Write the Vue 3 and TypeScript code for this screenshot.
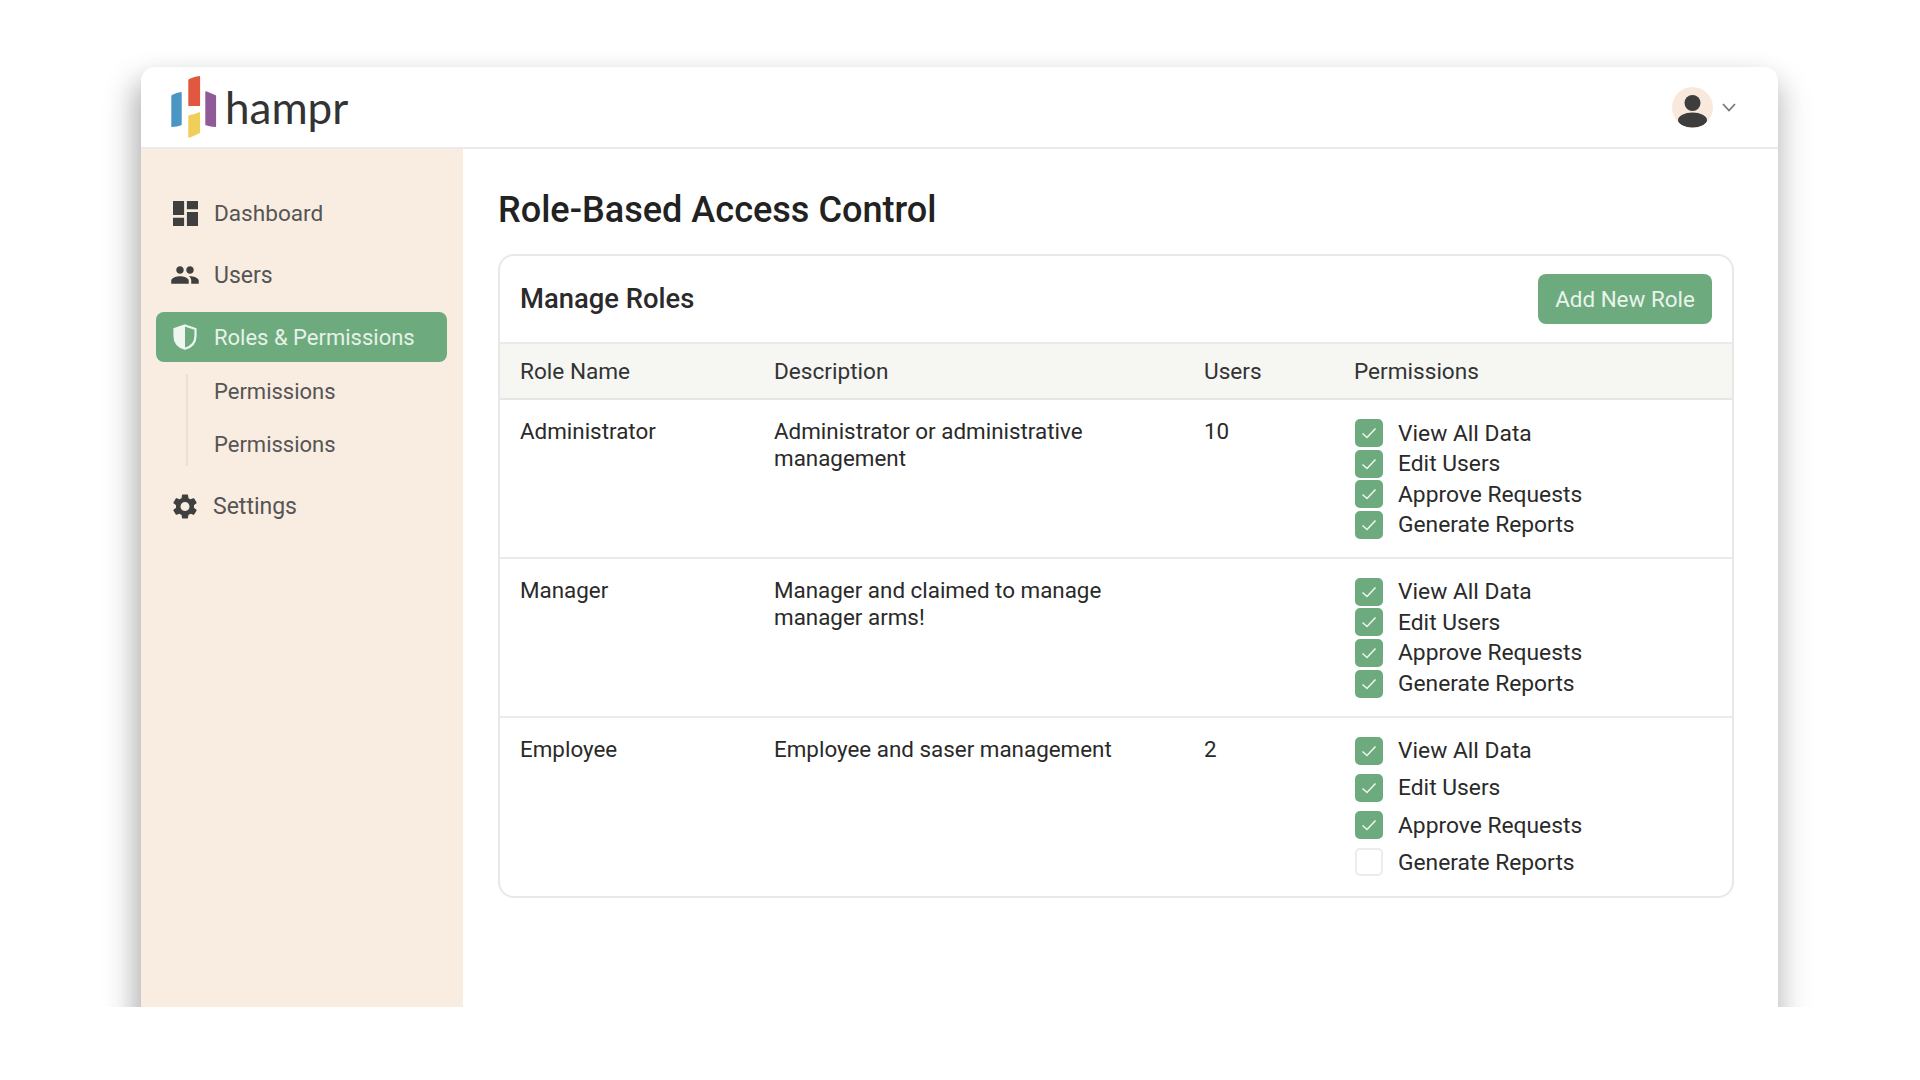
<script setup lang="ts">
interface Perm { label: string; on: boolean }
interface Role { name: string; desc: string[]; users: string; wide?: boolean; perms: Perm[] }
const labels = ['View All Data', 'Edit Users', 'Approve Requests', 'Generate Reports']
const mk = (off: string[] = []): Perm[] => labels.map((label) => ({ label, on: !off.includes(label) }))
const roles: Role[] = [
  { name: 'Administrator', desc: ['Administrator or administrative', 'management'], users: '10', perms: mk() },
  { name: 'Manager', desc: ['Manager and claimed to manage', 'manager arms!'], users: '', perms: mk() },
  { name: 'Employee', desc: ['Employee and saser management'], users: '2', wide: true, perms: mk(['Generate Reports']) },
]
</script>

<template>
  <div class="stage">
    <div class="window">
      <header class="topbar">
        <div class="brand">
          <svg class="logo" viewBox="0 0 46 62" width="46" height="62">
            <path d="M1 20 Q1 19 10 16.8 V48.5 Q6 50 1 50.2Z" fill="#4a97c4" stroke="#4a97c4" stroke-width="1.4" stroke-linejoin="round" />
            <path d="M18 4 Q18 3 28.4 0.8 V29.4 H18Z" fill="#e2573f" stroke="#e2573f" stroke-width="1.4" stroke-linejoin="round" />
            <path d="M18 40 Q24 39 28.4 36.8 V56.5 Q24 59 18 61.2Z" fill="#f0ce5a" stroke="#f0ce5a" stroke-width="1.4" stroke-linejoin="round" />
            <path d="M35 16 L44.4 20 V50.2 Q40 50 35 48.5Z" fill="#8f5a97" stroke="#8f5a97" stroke-width="1.4" stroke-linejoin="round" />
          </svg>
          <span class="wordmark">hampr</span>
        </div>
        <div class="account">
          <span class="avatar">
            <svg viewBox="0 0 41 41" width="41" height="41">
              <circle cx="20.5" cy="16" r="8" fill="#3d3d3d" />
              <ellipse cx="20.5" cy="33" rx="14.5" ry="7.5" fill="#3d3d3d" />
            </svg>
          </span>
          <svg class="chev" viewBox="0 0 14 9" width="14" height="9">
            <path d="M1 1 L7 7.5 L13 1" fill="none" stroke="#777" stroke-width="1.8" />
          </svg>
        </div>
      </header>
      <div class="body">
        <aside class="sidebar">
          <a class="nav-item dash">
            <svg class="ico" viewBox="3 3 18 18" width="25" height="25"><path fill="#3f3f3f" d="M3 13h8V3H3v10zm0 8h8v-6H3v6zm10 0h8V11h-8v10zm0-18v6h8V3h-8z" /></svg>
            <span>Dashboard</span>
          </a>
          <a class="nav-item users">
            <svg class="ico" viewBox="0 4 24 16" width="30" height="24"><path fill="#3f3f3f" d="M16 11c1.66 0 2.99-1.34 2.99-3S17.66 5 16 5c-1.66 0-3 1.34-3 3s1.34 3 3 3zm-8 0c1.66 0 2.99-1.34 2.99-3S9.66 5 8 5C6.34 5 5 6.34 5 8s1.34 3 3 3zm0 2c-2.33 0-7 1.17-7 3.5V19h14v-2.5c0-2.33-4.67-3.5-7-3.5zm8 0c-.29 0-.62.02-.97.05 1.16.84 1.97 1.97 1.97 3.45V19h6v-2.5c0-2.33-4.67-3.5-7-3.5z" /></svg>
            <span>Users</span>
          </a>
          <a class="nav-item active">
            <svg class="ico" viewBox="0 0 24 26" width="24" height="26">
              <path d="M12 1.5 L22.5 5 V12 C22.5 18.5 18 23 12 24.8 C6 23 1.5 18.5 1.5 12 V5 Z" fill="none" stroke="#eef6ef" stroke-width="2.2" />
              <path d="M12 1.5 L1.5 5 V12 C1.5 18.5 6 23 12 24.8 Z" fill="#eef6ef" />
            </svg>
            <span>Roles &amp; Permissions</span>
          </a>
          <div class="sub">
            <a class="sub-item">Permissions</a>
            <a class="sub-item">Permissions</a>
          </div>
          <a class="nav-item settings">
            <svg class="ico" viewBox="2.4 2 19.2 20" width="24" height="25"><path fill="#3f3f3f" d="M19.14 12.94c.04-.3.06-.61.06-.94 0-.32-.02-.64-.07-.94l2.03-1.58a.49.49 0 0 0 .12-.61l-1.92-3.32a.488.488 0 0 0-.59-.22l-2.39.96c-.5-.38-1.03-.7-1.62-.94l-.36-2.54a.484.484 0 0 0-.48-.41h-3.84c-.24 0-.43.17-.47.41l-.36 2.54c-.59.24-1.13.57-1.62.94l-2.39-.96c-.22-.08-.47 0-.59.22L2.74 8.87c-.12.21-.08.47.12.61l2.03 1.58c-.05.3-.09.63-.09.94s.02.64.07.94l-2.03 1.58a.49.49 0 0 0-.12.61l1.92 3.32c.12.22.37.29.59.22l2.39-.96c.5.38 1.03.7 1.62.94l.36 2.54c.05.24.24.41.48.41h3.84c.24 0 .44-.17.47-.41l.36-2.54c.59-.24 1.13-.56 1.62-.94l2.39.96c.22.08.47 0 .59-.22l1.92-3.32c.12-.22.07-.47-.12-.61l-2.01-1.58zM12 15.6c-1.98 0-3.6-1.62-3.6-3.6s1.62-3.6 3.6-3.6 3.6 1.62 3.6 3.6-1.62 3.6-3.6 3.6z" /></svg>
            <span>Settings</span>
          </a>
        </aside>
        <main class="main">
          <h1 class="title">Role-Based Access Control</h1>
          <section class="card">
            <div class="card-head">
              <h2>Manage Roles</h2>
              <button class="add" type="button">Add New Role</button>
            </div>
            <div class="grid head-row">
              <div>Role Name</div>
              <div>Description</div>
              <div>Users</div>
              <div>Permissions</div>
            </div>
            <div v-for="r in roles" :key="r.name" class="grid row">
              <div class="cell">{{ r.name }}</div>
              <div class="cell"><div v-for="d in r.desc" :key="d">{{ d }}</div></div>
              <div class="cell">{{ r.users }}</div>
              <ul class="perms" :class="{ wide: r.wide }">
                <li v-for="p in r.perms" :key="p.label" class="perm">
                  <span class="box" :class="{ on: p.on }">
                    <svg v-if="p.on" viewBox="0 0 16 12" width="16" height="12"><path d="M1.5 6.5 L6 10.5 L14.5 1.5" fill="none" stroke="#eaf5ec" stroke-width="1.6" /></svg>
                  </span>
                  <span>{{ p.label }}</span>
                </li>
              </ul>
            </div>
          </section>
        </main>
      </div>
    </div>
  </div>
</template>

<style>
html, body { margin: 0; background: #fff; }
</style>

<style scoped>
.stage {
  height: 1007px;
  box-sizing: border-box;
  padding: 67px 142px 0 141px;
  overflow: hidden;
  font-family: Roboto, "Liberation Sans", sans-serif;
  color: #2a2a2a;
}
.window {
  height: 1000px;
  background: #fff;
  border-radius: 14px 14px 0 0;
  box-shadow: -8px 14px 30px rgba(0, 0, 0, 0.26), 8px 14px 30px rgba(0, 0, 0, 0.13);
  display: flex;
  flex-direction: column;
}
.topbar {
  height: 82px;
  flex: none;
  box-sizing: border-box;
  border-bottom: 2px solid #ebebeb;
  display: flex;
  align-items: center;
  justify-content: space-between;
  padding: 0 42px 0 30px;
}
.brand { display: flex; align-items: center; gap: 8px; }
.logo { display: block; }
.wordmark {
  font-family: Lato, sans-serif;
  font-size: 44px;
  font-weight: 400;
  color: #333;
  line-height: 1;
}
.account { display: flex; align-items: center; gap: 9px; }
.avatar {
  width: 41px;
  height: 41px;
  border-radius: 50%;
  background: #f9e9dc;
  overflow: hidden;
  display: block;
}
.avatar svg, .chev { display: block; }
.body { flex: 1; display: flex; min-height: 0; }
.sidebar {
  width: 322px;
  flex: none;
  box-sizing: border-box;
  background: #f9ece0;
  padding: 39px 16px 0 15px;
  display: flex;
  flex-direction: column;
}
.nav-item {
  height: 50px;
  flex: none;
  display: flex;
  align-items: center;
  padding-left: 14px;
  font-size: 22px;
  color: #555;
  margin-bottom: 12px;
}
.ico { flex: none; margin: 0 16px 0 3px; }
.dash { font-size: 22.6px; }
.dash .ico { margin-right: 16px; }
.users { font-size: 23px; }
.users .ico { margin: 0 14px 0 0; }
.active {
  background: #6dab7f;
  color: #e6f2e8;
  border-radius: 8px;
  margin-bottom: 12px;
}
.active .ico { margin-right: 17px; }
.settings { font-size: 23px; }
.settings .ico { margin-right: 16px; }
.sub {
  margin: 0 0 15px 30px;
  border-left: 2px solid #e9e0d4;
  padding-left: 26px;
  height: 92px;
  display: flex;
  flex-direction: column;
  gap: 16.5px;
  flex: none;
}
.sub-item { height: 36px; line-height: 36px; font-size: 22px; color: #555; }
.main { flex: 1; padding: 38px 44px 0 35px; min-width: 0; }
.title {
  margin: 0 0 21px;
  font-size: 36.1px;
  line-height: 46px;
  font-weight: 500;
  color: #222;
}
.card {
  border: 2px solid #e8e8e8;
  border-radius: 16px;
  background: #fff;
  overflow: hidden;
}
.card-head {
  height: 88px;
  box-sizing: border-box;
  display: flex;
  align-items: center;
  justify-content: space-between;
  padding: 0 20px;
  border-bottom: 2px solid #ebebeb;
}
.card-head h2 { margin: 0; font-size: 27.4px; font-weight: 500; color: #2a2a2a; }
.add {
  width: 174px;
  height: 50px;
  border: 0;
  border-radius: 8px;
  background: #6dab7f;
  color: #e9f4eb;
  font: 400 22.4px Roboto, sans-serif;
  padding: 0;
}
.grid {
  display: grid;
  grid-template-columns: 254px 430px 150px 1fr;
  padding: 0 20px;
  font-size: 22.8px;
}
.head-row {
  height: 56px;
  box-sizing: border-box;
  padding-top: 1px;
  align-items: center;
  background: #f6f6f3;
  border-bottom: 2px solid #e6e6e6;
  color: #333;
  font-size: 22.6px;
}
.row {
  box-sizing: border-box;
  border-bottom: 2px solid #ebebeb;
}
.row:last-child { border-bottom: 0; }
.cell { padding-top: 18px; line-height: 27px; font-size: 22.4px; }
.perms {
  list-style: none;
  margin: 0;
  padding: 19px 0 18px 1px;
  display: flex;
  flex-direction: column;
  gap: 2.6px;
}
.perms.wide { gap: 9.3px; padding-bottom: 20px; }
.perm { display: flex; align-items: center; gap: 15px; height: 28px; }
.box {
  width: 28px;
  height: 28px;
  box-sizing: border-box;
  border-radius: 5px;
  border: 2px solid #ececec;
  display: flex;
  align-items: center;
  justify-content: center;
  flex: none;
}
.box.on { background: #6dab7f; border-color: #6dab7f; }
</style>
